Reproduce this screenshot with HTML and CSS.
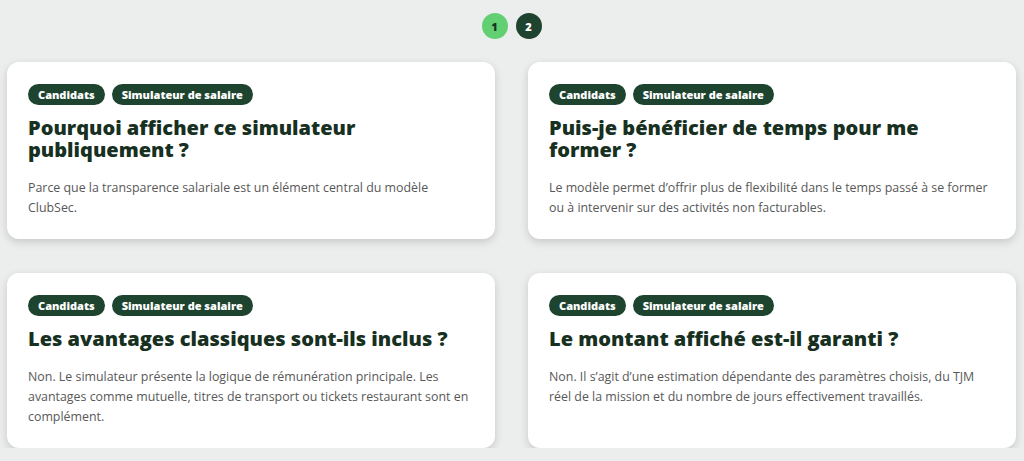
FILE: index.html
```html
<!DOCTYPE html>
<html lang="fr">
<head>
    <meta charset="UTF-8">
    <meta name="viewport" content="width=device-width, initial-scale=1.0">
    <title>FAQ - Simulateur de salaire</title>
    <link rel="stylesheet" href="styles.css">
</head>
<body>
    <nav class="pagination">
        <span class="page-dot active">1</span>
        <span class="page-dot">2</span>
    </nav>

    <div class="faq-grid">
        <div class="faq-card">
            <div class="faq-tags">
                <span class="faq-tag">Candidats</span>
                <span class="faq-tag">Simulateur de salaire</span>
            </div>
            <h2 class="faq-title">Pourquoi afficher ce simulateur publiquement ?</h2>
            <p class="faq-text">Parce que la transparence salariale est un élément central du modèle ClubSec.</p>
        </div>

        <div class="faq-card">
            <div class="faq-tags">
                <span class="faq-tag">Candidats</span>
                <span class="faq-tag">Simulateur de salaire</span>
            </div>
            <h2 class="faq-title">Puis-je bénéficier de temps pour me former ?</h2>
            <p class="faq-text">Le modèle permet d’offrir plus de flexibilité dans le temps passé à se former ou à intervenir sur des activités non facturables.</p>
        </div>

        <div class="faq-card">
            <div class="faq-tags">
                <span class="faq-tag">Candidats</span>
                <span class="faq-tag">Simulateur de salaire</span>
            </div>
            <h2 class="faq-title">Les avantages classiques sont-ils inclus ?</h2>
            <p class="faq-text">Non. Le simulateur présente la logique de rémunération principale. Les avantages comme mutuelle, titres de transport ou tickets restaurant sont en complément.</p>
        </div>

        <div class="faq-card">
            <div class="faq-tags">
                <span class="faq-tag">Candidats</span>
                <span class="faq-tag">Simulateur de salaire</span>
            </div>
            <h2 class="faq-title">Le montant affiché est-il garanti ?</h2>
            <p class="faq-text">Non. Il s’agit d’une estimation dépendante des paramètres choisis, du TJM réel de la mission et du nombre de jours effectivement travaillés.</p>
        </div>
    </div>
</body>
</html>
```

FILE: styles.css
```css
body {
    font-family: "Open Sans", Arial, sans-serif;
    background-color: #eceeee;
    margin: 0;
    padding: 13px 8px 0 7px;
}

.pagination {
    display: flex;
    justify-content: center;
    gap: 8px;
    margin-bottom: 23px;
}

.page-dot {
    width: 26px;
    height: 26px;
    border-radius: 50%;
    background-color: #1e4430;
    color: white;
    font-size: 11px;
    font-weight: 800;
    display: flex;
    align-items: center;
    justify-content: center;
}

.page-dot.active {
    background-color: #62cf72;
    color: #17331f;
}

.faq-grid {
    display: grid;
    grid-template-columns: repeat(2, 1fr);
    column-gap: 33px;
    row-gap: 34px;
}

.faq-card {
    background-color: white;
    border-radius: 12px;
    box-shadow: 0 3px 8px rgba(0, 0, 0, 0.16);
    padding: 22px 20px 21px 21px;
}

.faq-tags {
    display: flex;
    gap: 7px;
}

.faq-tag {
    background-color: #1e4430;
    color: white;
    font-size: 11px;
    font-weight: 800;
    height: 21px;
    line-height: 21px;
    padding: 0 10px;
    border-radius: 11px;
}

.faq-title {
    font-size: 20px;
    font-weight: 800;
    line-height: 22px;
    color: #17301f;
    margin: 12px 0 17px;
    max-width: 425px;
}

.faq-text {
    font-size: 12.4px;
    line-height: 20px;
    color: #585858;
    margin: 0;
}
```
